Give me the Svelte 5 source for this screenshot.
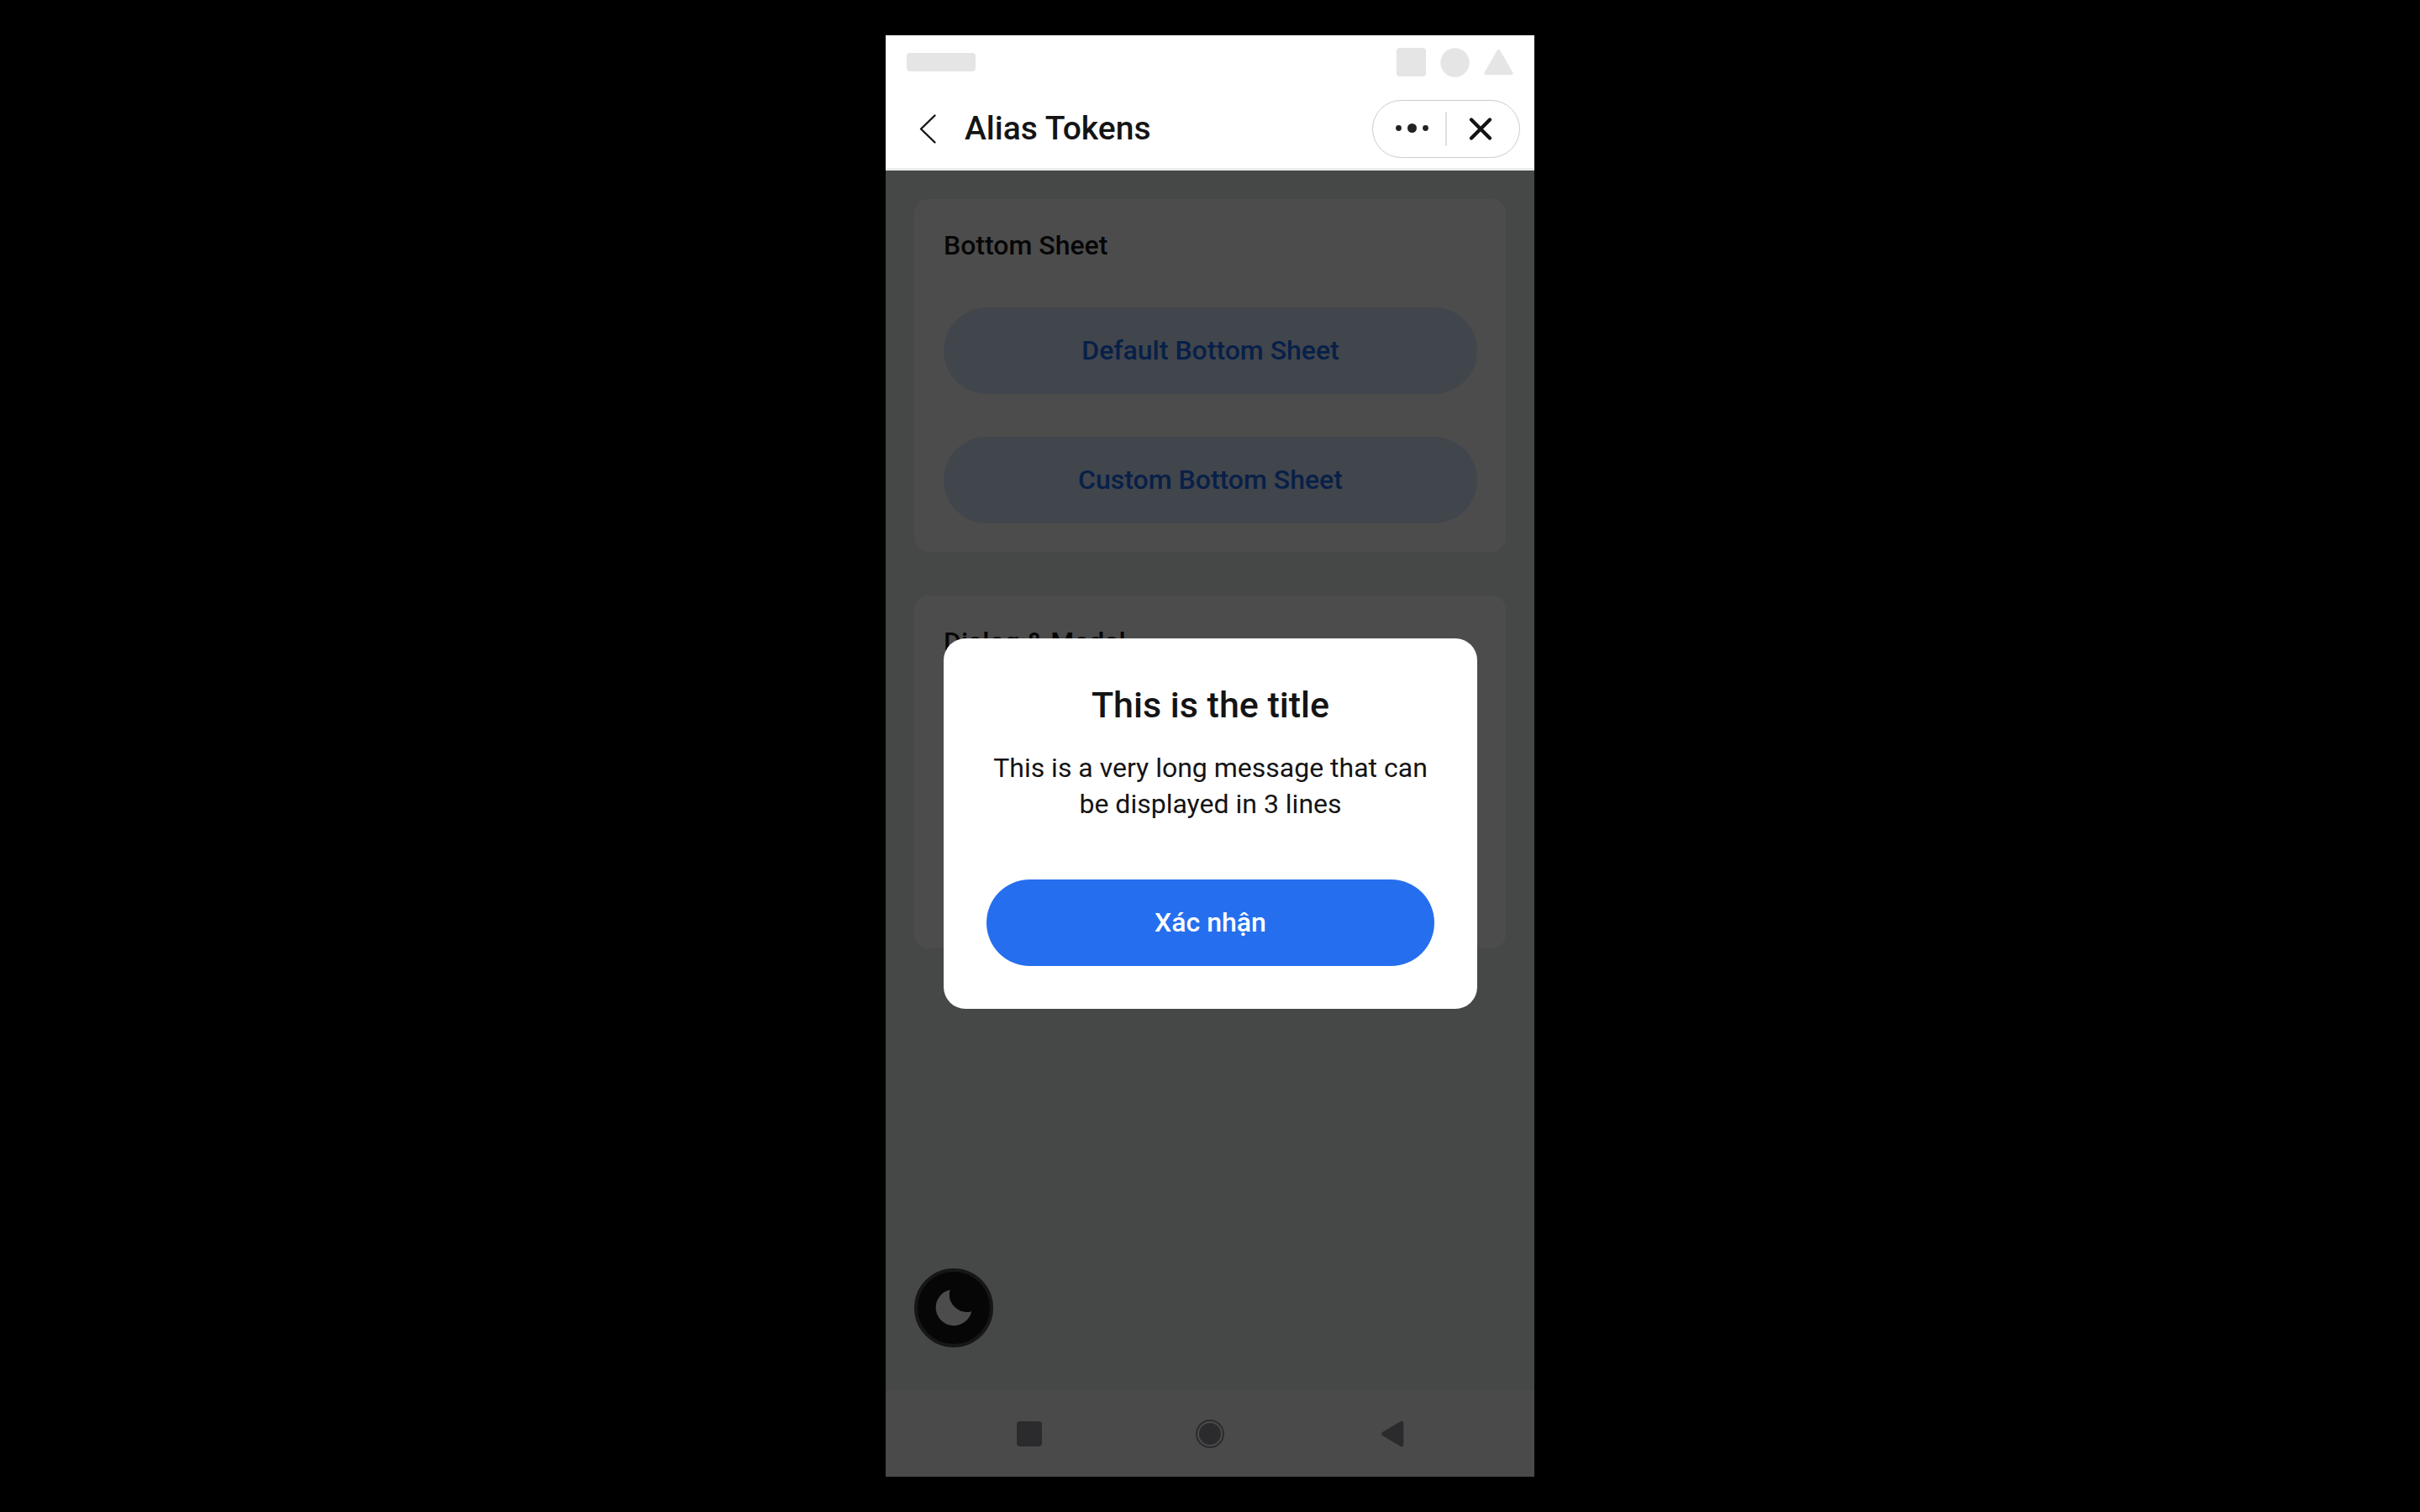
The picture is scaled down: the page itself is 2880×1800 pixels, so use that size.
<script>
  const sections = [
    { title: 'Bottom Sheet', actions: ['Default Bottom Sheet', 'Custom Bottom Sheet'] },
    { title: 'Dialog & Modal', actions: ['Dialog', 'Modal'] }
  ];
</script>

<div class="stage">
  <div class="phone">
    <header class="top">
      <div class="status" aria-hidden="true">
        <span class="clock"></span>
        <svg class="glyph" viewBox="0 0 35 35"><rect width="35" height="34" rx="4" /></svg>
        <svg class="glyph" viewBox="0 0 35 35"><circle cx="17.5" cy="17.5" r="17.2" /></svg>
        <svg class="glyph" viewBox="0 0 35 35">
          <path d="M19.3 3 34.2 29Q35.6 32 32.3 32.3H2.7Q-.6 32 .8 29L15.7 3Q17.5 .8 19.3 3Z" />
        </svg>
      </div>
      <div class="appbar">
        <button class="back" aria-label="Back">
          <svg viewBox="0 0 51 51"><path d="M32.5 9.5 16 25.5 32.5 41.5" /></svg>
        </button>
        <h1>Alias Tokens</h1>
        <div class="capsule">
          <button aria-label="More">
            <svg viewBox="0 0 51 51" class="dots">
              <circle cx="12.5" cy="24.5" r="3.4" />
              <circle cx="28.5" cy="24.5" r="5.5" />
              <circle cx="44.5" cy="24.5" r="3.4" />
            </svg>
          </button>
          <span class="divider"></span>
          <button aria-label="Close">
            <svg viewBox="0 0 51 51" class="cross"><path d="M11 14.5 33 36.5M33 14.5 11 36.5" /></svg>
          </button>
        </div>
      </div>
    </header>

    <div class="screen">
      <main>
        {#each sections as section}
          <section>
            <h2>{section.title}</h2>
            <div class="actions">
              {#each section.actions as action}
                <button class="pill tint">{action}</button>
              {/each}
            </div>
          </section>
        {/each}
        <button class="fab" aria-label="Dark mode">
          <svg viewBox="0 0 44 44">
            <path d="M17.7 .6A21.5 21.5 0 1 0 43.2 26.2A20.8 20.8 0 0 1 17.7 .6Z" />
          </svg>
        </button>
      </main>

      <nav>
        <button aria-label="Recent apps">
          <svg viewBox="0 0 36 36"><rect x="3" y="3" width="30" height="30" rx="4" /></svg>
        </button>
        <button aria-label="Home">
          <svg viewBox="0 0 36 36">
            <circle cx="18" cy="18" r="13" />
            <circle cx="18" cy="18" r="16" class="ring" />
          </svg>
        </button>
        <button aria-label="System back">
          <svg viewBox="0 0 36 36">
            <path d="M7.6 16.3 30 3.1Q33 2 33.3 5V31Q33 34 30 32.9L7.6 19.7Q6 18 7.6 16.3Z" />
          </svg>
        </button>
      </nav>

      <div class="overlay">
        <dialog open aria-labelledby="dialog-title">
          <h3 id="dialog-title">This is the title</h3>
          <p>This is a very long message that can be displayed in 3 lines</p>
          <button class="pill primary">Xác nhận</button>
        </dialog>
      </div>
    </div>
  </div>
</div>

<style>
  :global(body) {
    margin: 0;
    background: #000;
  }
  .stage,
  .stage :global(*) {
    box-sizing: border-box;
  }
  .stage {
    min-height: 100vh;
    padding: 42px 0;
    display: flex;
    justify-content: center;
    background: #000;
    color: #141415;
    font-family: Roboto, sans-serif;
    font-size: 32px;
    line-height: 43px;
  }
  .phone {
    width: 100%;
    max-width: 772px;
    display: flex;
    flex-direction: column;
    overflow: hidden;
    background: #e8f0ed;
  }
  h1,
  h2,
  h3,
  p {
    margin: 0;
    font-weight: 500;
  }
  button {
    padding: 0;
    border: 0;
    background: none;
    color: inherit;
    font: inherit;
    cursor: pointer;
  }
  svg {
    display: block;
  }

  .top {
    background: #fff;
    border-bottom: 3px solid #e9edeb;
  }
  .status {
    height: 64px;
    padding: 0 25px;
    display: flex;
    align-items: center;
    gap: 17px;
  }
  .clock {
    width: 82px;
    height: 22px;
    margin-right: auto;
    border-radius: 4px;
    background: #e5e5e5;
  }
  .glyph {
    width: 35px;
    height: 35px;
    fill: #e5e5e5;
  }
  .appbar {
    height: 94px;
    padding: 0 17px 0 26px;
    display: flex;
    align-items: center;
    gap: 17px;
  }
  .back svg {
    width: 51px;
    height: 51px;
    fill: none;
    stroke: #141415;
    stroke-width: 2.4;
    stroke-linecap: round;
    stroke-linejoin: round;
  }
  h1 {
    flex: 1;
    font-size: 39px;
    line-height: 51px;
  }
  .capsule {
    width: 176px;
    height: 69px;
    display: flex;
    align-items: center;
    border: 1px solid #cbcccd;
    border-radius: 35px;
  }
  .capsule button {
    flex: 1;
    display: flex;
    justify-content: center;
  }
  .capsule svg {
    width: 51px;
    height: 51px;
  }
  .dots {
    fill: #222;
  }
  .cross {
    fill: none;
    stroke: #141415;
    stroke-width: 4.4;
    stroke-linecap: round;
  }
  .divider {
    width: 2px;
    height: 41px;
    background: #dfe0e1;
  }

  .screen {
    flex: 1;
    position: relative;
    display: flex;
    flex-direction: column;
  }
  main {
    flex: 1;
    position: relative;
    padding: 34px;
    display: flex;
    flex-direction: column;
    gap: 52px;
  }
  section {
    padding: 34px 34px 34px 35px;
    border-radius: 17px;
    background: #fff;
  }
  h2 {
    font-size: 32px;
    line-height: 43px;
  }
  .actions {
    margin-top: 52px;
    display: flex;
    flex-direction: column;
    gap: 51px;
  }
  .pill {
    width: 100%;
    height: 103px;
    border-radius: 52px;
    font-weight: 500;
  }
  .tint {
    background: #d9e6fd;
    color: #1a6cf0;
  }
  .primary {
    background: #256fee;
    color: #fff;
  }
  .fab {
    position: absolute;
    left: 34px;
    bottom: 51px;
    width: 94px;
    height: 94px;
    display: grid;
    place-items: center;
    border: 4px solid #4a4a4a;
    border-radius: 50%;
    background: #141415;
  }
  .fab svg {
    width: 44px;
    height: 44px;
    fill: #fff;
  }
  nav {
    height: 103px;
    padding: 0 63px;
    display: flex;
    align-items: center;
    background: #f7f7f7;
  }
  nav button {
    flex: 1;
    display: flex;
    justify-content: center;
  }
  nav svg {
    width: 36px;
    height: 36px;
    fill: #8f9296;
  }
  .ring {
    fill: none;
    stroke: #8f9296;
    stroke-width: 2;
  }

  .overlay {
    position: absolute;
    inset: 0;
    padding: 0 68px 0 69px;
    display: flex;
    align-items: center;
    background: rgba(0, 0, 0, 0.7);
  }
  dialog {
    position: static;
    width: 100%;
    margin: 0;
    padding: 51px;
    border: 0;
    border-radius: 26px;
    background: #fff;
    color: inherit;
    text-align: center;
  }
  h3 {
    font-size: 43px;
    line-height: 56px;
  }
  p {
    margin: 26px 0 68px;
    font-weight: 400;
  }
</style>
